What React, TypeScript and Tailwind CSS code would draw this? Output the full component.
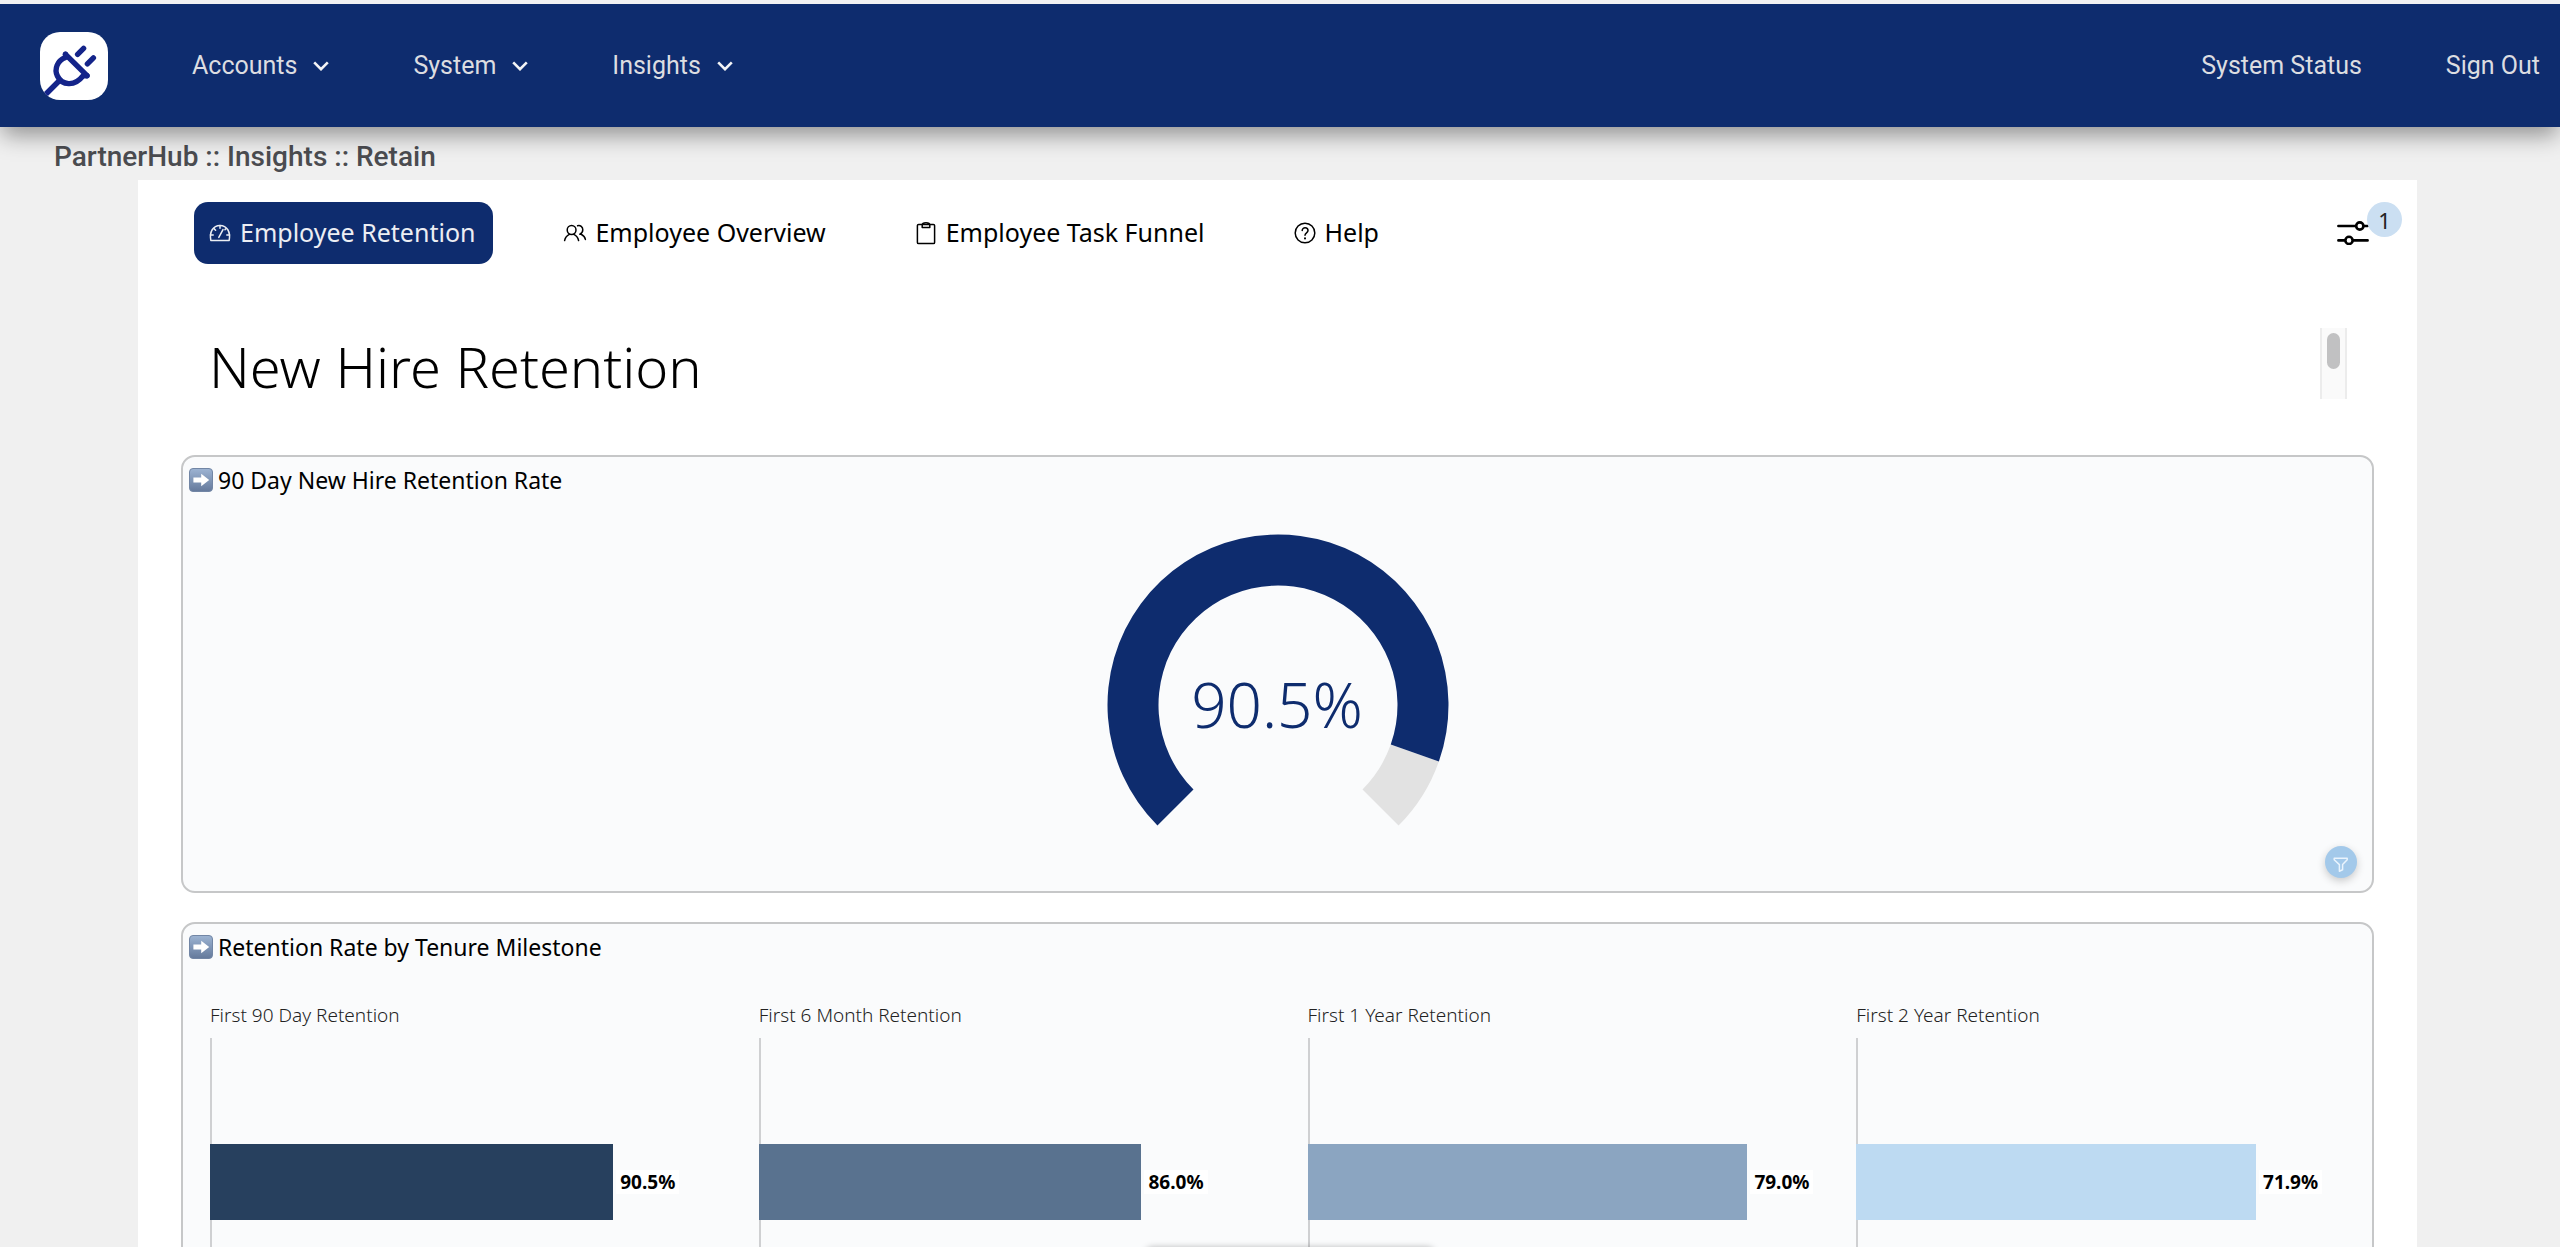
import React from "react";

interface Tab {
  label: string;
  icon: React.ReactNode;
  active?: boolean;
}

interface Milestone {
  label: string;
  value: string;
  width: number;
  color: string;
}

const NAV_ITEMS = ["Accounts", "System", "Insights"];

const MILESTONES: Milestone[] = [
  { label: "First 90 Day Retention", value: "90.5%", width: 82.5, color: "bg-[#27405e]" },
  { label: "First 6 Month Retention", value: "86.0%", width: 78.3, color: "bg-[#59728f]" },
  { label: "First 1 Year Retention", value: "79.0%", width: 90, color: "bg-[#8ba5c1]" },
  { label: "First 2 Year Retention", value: "71.9%", width: 81.8, color: "bg-[#bddaf2]" },
];

const iconProps = {
  width: 24,
  height: 24,
  viewBox: "0 0 24 24",
  fill: "none",
  stroke: "currentColor",
  strokeWidth: 1.5,
  strokeLinecap: "round" as const,
  strokeLinejoin: "round" as const,
  "aria-hidden": true,
};

const GaugeIcon = () => (
  <svg {...iconProps}>
    <path d="M2.8 19.4C1.2 11 5 4.4 12 4.4S22.8 11 21.2 19.4z" />
    <path d="M10.8 16.4 15 8.6M12 4.6v2.6M6 7.6l1.6 1.6M2.4 14h2.8M18.8 14h2.8M17.8 7.8l-.8.8" />
  </svg>
);

const PeopleIcon = () => (
  <svg {...iconProps}>
    <circle cx="8.6" cy="9" r="4.4" />
    <path d="M1.6 19.6c.6-3.2 2.4-5 4.8-6.2M15.6 19.6c-.6-3.2-2.4-5-4.8-6.2" />
    <path d="M14.6 4.8c2.8-.8 5.2 1.2 5.2 4 0 2-1.2 3.6-3 4.4M17.8 13c2.4 1.2 4 2.8 4.6 5.4" />
  </svg>
);

const ClipboardIcon = () => (
  <svg {...iconProps}>
    <rect x="3.4" y="3.4" width="17.2" height="19.2" rx="1.2" />
    <path d="M8.2 3.6v2.8h7.6V3.6M8.2 4.4c0-3.4 7.6-3.4 7.6 0" />
  </svg>
);

const HelpIcon = () => (
  <svg {...iconProps}>
    <circle cx="12" cy="12" r="9.8" />
    <path d="M9.2 9.6c0-3.8 5.8-3.6 5.8 0 0 2.2-3 2.2-3 4.6" />
    <path d="M12 17.2v.2" strokeWidth={2} />
  </svg>
);

const TABS: Tab[] = [
  { label: "Employee Retention", icon: <GaugeIcon />, active: true },
  { label: "Employee Overview", icon: <PeopleIcon /> },
  { label: "Employee Task Funnel", icon: <ClipboardIcon /> },
  { label: "Help", icon: <HelpIcon /> },
];

const Logo = () => (
  <svg
    width="68"
    height="68"
    viewBox="0 0 68 68"
    className="rounded-[20px] bg-white"
    fill="none"
    stroke="#14248a"
    strokeWidth="5.4"
    strokeLinecap="round"
    strokeLinejoin="round"
    aria-hidden
  >
    <path d="M25.5 22.3 47 43.7" />
    <path d="M25.5 22.3v3.2C17.4 28.6 14 36.8 17.4 44c4.4 9.2 17 11.2 25.8-.3H47" />
    <path d="M19 49 4.5 63.5M37.6 22.3l6-6M47.4 31.8l6-6" />
  </svg>
);

const Chevron = () => (
  <svg width="16" height="10" viewBox="0 0 16 10" fill="none" stroke="#f3f4f6" strokeWidth="2.6" aria-hidden>
    <path d="M1.2 1.4 8 8.2l6.8-6.8" />
  </svg>
);

const Navbar = () => (
  <header className="relative z-10 border-t-4 border-[#f1f1f3] bg-[#0e2c6e] font-['Roboto',sans-serif] text-[25px] text-[#dcdde1] shadow-[0_10px_22px_-2px_rgba(0,0,0,0.4)]">
    <nav className="flex h-[123px] items-center gap-[84px] pr-5 pl-10">
      <a href="#home" aria-label="PartnerHub home">
        <Logo />
      </a>
      {NAV_ITEMS.map((item) => (
        <button key={item} type="button" className="flex items-center gap-4">
          {item}
          <Chevron />
        </button>
      ))}
      <a href="#status" className="ml-auto">
        System Status
      </a>
      <a href="#signout">Sign Out</a>
    </nav>
  </header>
);

const TabBar = () => (
  <div className="flex items-center pr-[31px] pl-[56px]">
    <div className="flex gap-14">
      {TABS.map((tab) => (
        <button
          key={tab.label}
          type="button"
          className={`flex h-[62px] items-center gap-2 rounded-[14px] pr-[18px] pl-3.5 text-[25px] ${
            tab.active ? "bg-[#0e2c6e] text-[#eceef3]" : "text-black"
          }`}
        >
          {tab.icon}
          {tab.label}
        </button>
      ))}
    </div>
    <button type="button" aria-label="Filters, 1 applied" className="relative ml-auto h-[62px] w-[49px]">
      <svg width="32" height="24" viewBox="0 0 32 24" fill="#fff" stroke="#000" strokeWidth="2.6" strokeLinecap="round" aria-hidden>
        <path d="M1.4 5h29.2M1.4 19.4h29.2" />
        <circle cx="22.8" cy="5" r="3.6" />
        <circle cx="12" cy="19.4" r="3.6" />
      </svg>
      <span className="absolute top-0 left-[30px] flex size-[35px] items-center justify-center rounded-full bg-[#cbdff2] text-[22px] leading-none text-[#222]">
        1
      </span>
    </button>
  </div>
);

const ArrowBadge = () => (
  <svg width="24" height="24" viewBox="0 0 24 24" aria-hidden>
    <defs>
      <linearGradient id="arrow-badge" x1="0" y1="0" x2="0" y2="1">
        <stop offset="0" stopColor="#9db4d3" />
        <stop offset="1" stopColor="#64799b" />
      </linearGradient>
    </defs>
    <rect x=".5" y=".5" width="23" height="23" rx="3.5" fill="url(#arrow-badge)" stroke="#7286a5" />
    <path d="M4.4 9.6h7.8V5.8l8 6.2-8 6.2v-3.8H4.4z" fill="#fff" />
  </svg>
);

const Card = ({ title, children }: { title: string; children: React.ReactNode }) => (
  <section className="relative rounded-[14px] border-2 border-[#c6c7c8] bg-[#fafbfc]">
    <h2 className="flex items-center gap-[5px] px-1.5 pt-[7px] text-[23px] leading-8 text-black">
      <ArrowBadge />
      {title}
    </h2>
    {children}
  </section>
);

// Point on a circle around the gauge centre, angle in degrees clockwise from 3 o'clock
const polar = (r: number, deg: number) => {
  const a = (deg * Math.PI) / 180;
  return `${(171 + r * Math.cos(a)).toFixed(2)} ${(171 + r * Math.sin(a)).toFixed(2)}`;
};

const arc = (from: number, to: number) => {
  const large = to - from > 180 ? 1 : 0;
  return `M${polar(170.5, from)}A170.5 170.5 0 ${large} 1 ${polar(170.5, to)}L${polar(119.5, to)}A119.5 119.5 0 ${large} 0 ${polar(119.5, from)}Z`;
};

const Gauge = ({ value }: { value: number }) => {
  const split = 135 + (270 * value) / 100;
  return (
    <svg width="342" height="296" viewBox="0 0 342 296" className="mx-auto mt-[38px] mb-[61px]" role="img" aria-label={`${value}%`}>
      <path d={arc(split, 405)} fill="#e2e2e2" />
      <path d={arc(135, split)} fill="#0e2c6e" />
      <text x="170" y="194" textAnchor="middle" fill="#0e2c6e" className="text-[62px] font-light">
        {value}%
      </text>
    </svg>
  );
};

const MilestoneBar = ({ item }: { item: Milestone }) => (
  <div className="min-w-0">
    <h3 className="text-[19px] leading-7 font-light text-[#222]">{item.label}</h3>
    <div className="mt-[9px] h-72 border-l-2 border-[#cfd0d2] pt-[106px]">
      <div className="-ml-0.5 flex items-center">
        <div className={`h-[76px] shrink-0 ${item.color}`} style={{ width: `${item.width}%` }} />
        <span className="ml-[3px] bg-white px-1 text-[19px] leading-6 font-bold text-black">{item.value}</span>
      </div>
    </div>
  </div>
);

export default function App() {
  return (
    <div className="relative h-screen overflow-hidden bg-[#f0f0f0] font-['Noto_Sans',sans-serif]">
      <Navbar />
      <p className="pt-3.5 pb-[7px] pl-[54px] font-['Roboto',sans-serif] text-[28px] leading-8 font-medium text-[#4b4c50]">
        PartnerHub :: Insights :: Retain
      </p>
      <main className="mr-[143px] ml-[138px] bg-white pt-[22px] pb-12">
        <TabBar />
        <div className="mx-[43px]">
          <div className="mt-16 mb-14 flex h-[71px] justify-between pr-[27px] pl-7">
            <h1 className="text-[56px] leading-[76px] font-light text-black">New Hire Retention</h1>
            <div className="w-[27px] border-x-2 border-[#ececec] bg-[#fafafa] px-[5px] pt-[5px]">
              <div className="h-9 rounded-full bg-[#c1c1c2]" />
            </div>
          </div>
          <div className="flex flex-col gap-[29px]">
            <Card title="90 Day New Hire Retention Rate">
              <Gauge value={90.5} />
              <button
                type="button"
                aria-label="Filter"
                className="absolute right-[15px] bottom-[13px] flex size-8 items-center justify-center rounded-full bg-[#a3c9ea] shadow-[0_3px_8px_rgba(0,0,0,0.2)]"
              >
                <svg width="16" height="16" viewBox="0 0 16 16" className="mt-1.5" fill="none" stroke="#eaf4fd" strokeWidth="1.5" strokeLinejoin="round" aria-hidden>
                  <path d="M1.2 1.2h13v1.6L9.6 7.6v5.2L6.4 14.2V7.6L1.2 2.8z" />
                </svg>
              </button>
            </Card>
            <Card title="Retention Rate by Tenure Milestone">
              <div className="mt-[38px] grid grid-cols-4 gap-[60px] px-[27px] pb-8">
                {MILESTONES.map((item) => (
                  <MilestoneBar key={item.label} item={item} />
                ))}
              </div>
            </Card>
          </div>
        </div>
      </main>
      <div className="absolute top-full left-1/2 ml-2.5 h-10 w-[290px] -translate-x-1/2 rounded-lg bg-white shadow-[0_0_6px_rgba(0,0,0,0.25)]" />
    </div>
  );
}
